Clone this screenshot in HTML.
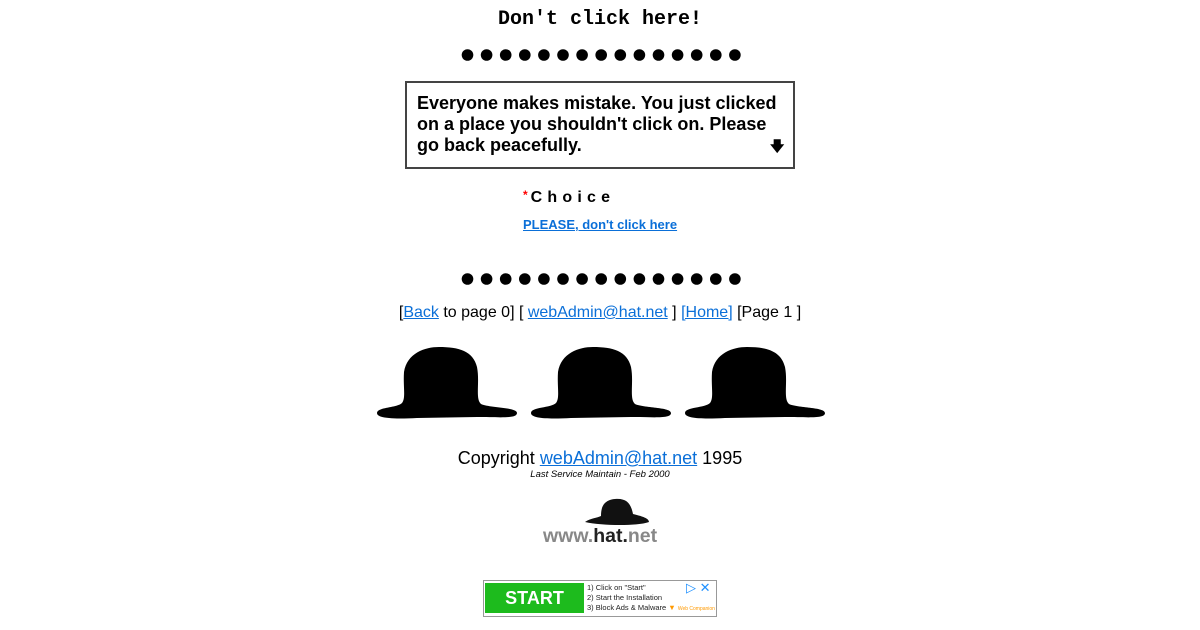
<!DOCTYPE html>
<html><head><meta charset="utf-8"><style>
body{margin:0;background:#fff;width:1200px;height:630px;position:relative;font-family:"Liberation Sans",sans-serif;overflow:hidden}
.a{position:absolute}
a{color:#0a6fd8}
.dots{position:absolute;left:461px;width:280px;height:14px}
.box{left:405px;top:81px;width:386px;height:84px;border:2px solid #444;box-sizing:content-box}
</style></head><body>
<div class="a" style="left:0;width:1200px;top:8px;text-align:center;font:bold 20px 'Liberation Mono',monospace">Don't click here!</div>
<svg class="dots" style="top:48px" viewBox="0 0 280 14"><g fill="#000">
<circle cx="6.5" cy="7" r="5.8"/><circle cx="25.6" cy="7" r="5.8"/><circle cx="44.7" cy="7" r="5.8"/><circle cx="63.8" cy="7" r="5.8"/><circle cx="82.9" cy="7" r="5.8"/><circle cx="102" cy="7" r="5.8"/><circle cx="121.1" cy="7" r="5.8"/><circle cx="140.2" cy="7" r="5.8"/><circle cx="159.3" cy="7" r="5.8"/><circle cx="178.4" cy="7" r="5.8"/><circle cx="197.5" cy="7" r="5.8"/><circle cx="216.6" cy="7" r="5.8"/><circle cx="235.7" cy="7" r="5.8"/><circle cx="254.8" cy="7" r="5.8"/><circle cx="273.9" cy="7" r="5.8"/></g></svg>
<div class="a box"></div>
<div class="a" style="left:417px;top:93px;width:366px;font:bold 18px/21px 'Liberation Sans',sans-serif;color:#000">Everyone makes mistake. You just clicked on a place you shouldn't click on. Please go back peacefully.</div>
<div class="a" style="left:770px;top:136px;font:bold 14px sans-serif">&#x1F847;</div>
<div class="a" style="left:523px;top:188px;font:bold 16px 'Liberation Sans',sans-serif;letter-spacing:5.2px"><span style="color:red;font-size:12px;letter-spacing:3px;vertical-align:3px">*</span>Choice</div>
<div class="a" style="left:523px;top:217px;font:bold 13px 'Liberation Sans',sans-serif"><a href="#">PLEASE, don't click here</a></div>
<svg class="dots" style="top:272px" viewBox="0 0 280 14"><g fill="#000">
<circle cx="6.5" cy="7" r="5.8"/><circle cx="25.6" cy="7" r="5.8"/><circle cx="44.7" cy="7" r="5.8"/><circle cx="63.8" cy="7" r="5.8"/><circle cx="82.9" cy="7" r="5.8"/><circle cx="102" cy="7" r="5.8"/><circle cx="121.1" cy="7" r="5.8"/><circle cx="140.2" cy="7" r="5.8"/><circle cx="159.3" cy="7" r="5.8"/><circle cx="178.4" cy="7" r="5.8"/><circle cx="197.5" cy="7" r="5.8"/><circle cx="216.6" cy="7" r="5.8"/><circle cx="235.7" cy="7" r="5.8"/><circle cx="254.8" cy="7" r="5.8"/><circle cx="273.9" cy="7" r="5.8"/></g></svg>
<div class="a" style="left:0;width:1200px;top:304px;text-align:center;font-size:16px">[<a href="#">Back</a> to page 0] [ <a href="#">webAdmin@hat.net</a> ] <a href="#">[Home]</a> [Page 1 ]</div>
<svg class="a" style="left:377px;top:347px" width="450" height="73" viewBox="0 0 450 73">
<defs><path id="h" d="M0,66 C0,60 20,61 25,56 C29,51 26,40 27,25 C30,6 48,0 62,0 C82,0 96,4 100,20 C103,35 98,52 104,57 C112,61 140,60 140,66 C140,72 122,70 100,70 L40,71 C20,72 0,72 0,66 Z"/></defs>
<use href="#h"/><use href="#h" x="154"/><use href="#h" x="308"/></svg>
<div class="a" style="left:0;width:1200px;top:448px;text-align:center;font-size:18px">Copyright <a href="#">webAdmin@hat.net</a> 1995</div>
<div class="a" style="left:0;width:1200px;top:469px;text-align:center;font:italic 9.5px 'Liberation Sans',sans-serif">Last Service Maintain - Feb 2000</div>
<svg class="a" style="left:583px;top:496px" width="70" height="34" viewBox="0 0 70 34"><path d="M2,26 C8,22 14,22 18,20 C18,12 20,4 32,3 C44,2 48,8 50,18 C58,20 66,22 66,26 C56,30 20,30 2,26Z" fill="#111"/></svg>
<div class="a" style="left:543px;top:525px;font:bold 19.5px 'Liberation Sans',sans-serif;color:#888">www.<span style="color:#222">hat.</span>net</div>
<div class="a" style="left:483px;top:580px;width:232px;height:35px;border:1px solid #999"></div>
<div class="a" style="left:485px;top:583px;width:99px;height:30px;background:#1dbb1d;color:#fff;font:bold 18px/30px 'Liberation Sans',sans-serif;text-align:center">START</div>
<div class="a" style="left:587px;top:583px;font:7.5px/10px 'Liberation Sans',sans-serif;color:#222">1) Click on "Start"<br>2) Start the Installation<br>3) Block Ads &amp; Malware <span style="color:#f90">▼</span> <span style="color:#f90;font-size:5px">Web Companion</span></div>
<div class="a" style="left:686px;top:580px;color:#1e90ff;font:13px sans-serif">▷ ✕</div>
</body></html>
